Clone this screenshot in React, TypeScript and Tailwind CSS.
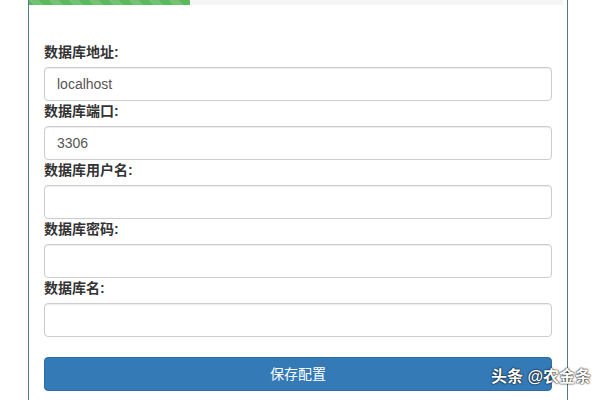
export default function App() {
  const fields = [
    { label: "数据库地址:", value: "localhost" },
    { label: "数据库端口:", value: "3306" },
    { label: "数据库用户名:", value: "" },
    { label: "数据库密码:", value: "" },
    { label: "数据库名:", value: "" },
  ]

  return (
    <div
      className="relative w-[600px] h-[400px] overflow-hidden bg-white"
      style={{ fontFamily: '"Liberation Sans", "Noto Sans CJK SC", sans-serif' }}
    >
      <div className="ml-[28px] w-[540px] h-full border-x border-[#55788a]">
        <div className="flex h-[5px] mr-[4px] bg-[#f5f5f5]">
          <div className="w-[161px] h-full bg-[#5cb85c] bg-[linear-gradient(45deg,rgba(255,255,255,.15)_25%,transparent_25%,transparent_50%,rgba(255,255,255,.15)_50%,rgba(255,255,255,.15)_75%,transparent_75%,transparent)] bg-[length:20px_20px]"></div>
        </div>

        <form className="px-[15px] pt-[37px]">
          {fields.map((f) => (
            <div key={f.label}>
              <label className="block mb-[5px] text-[14px] leading-[20px] font-bold text-[#333]">{f.label}</label>
              <input
                defaultValue={f.value}
                className="block w-full h-[34px] px-[12px] text-[14px] text-[#555] bg-white border border-[#ccc] rounded-[4px] shadow-[inset_0_1px_1px_rgba(0,0,0,.075)] outline-none"
              />
            </div>
          ))}

          <button
            type="button"
            className="block w-full h-[34px] mt-[20px] text-[14px] text-white bg-[#337ab7] border border-[#2e6da4] rounded-[4px]"
          >
            保存配置
          </button>
        </form>
      </div>

      <div className="absolute right-[9px] bottom-[11px] text-[16px] font-bold text-white [text-shadow:0_0_2px_rgba(0,0,0,.9),0_0_1px_rgba(0,0,0,.9)]">
        头条 @农金条
      </div>
    </div>
  )
}
